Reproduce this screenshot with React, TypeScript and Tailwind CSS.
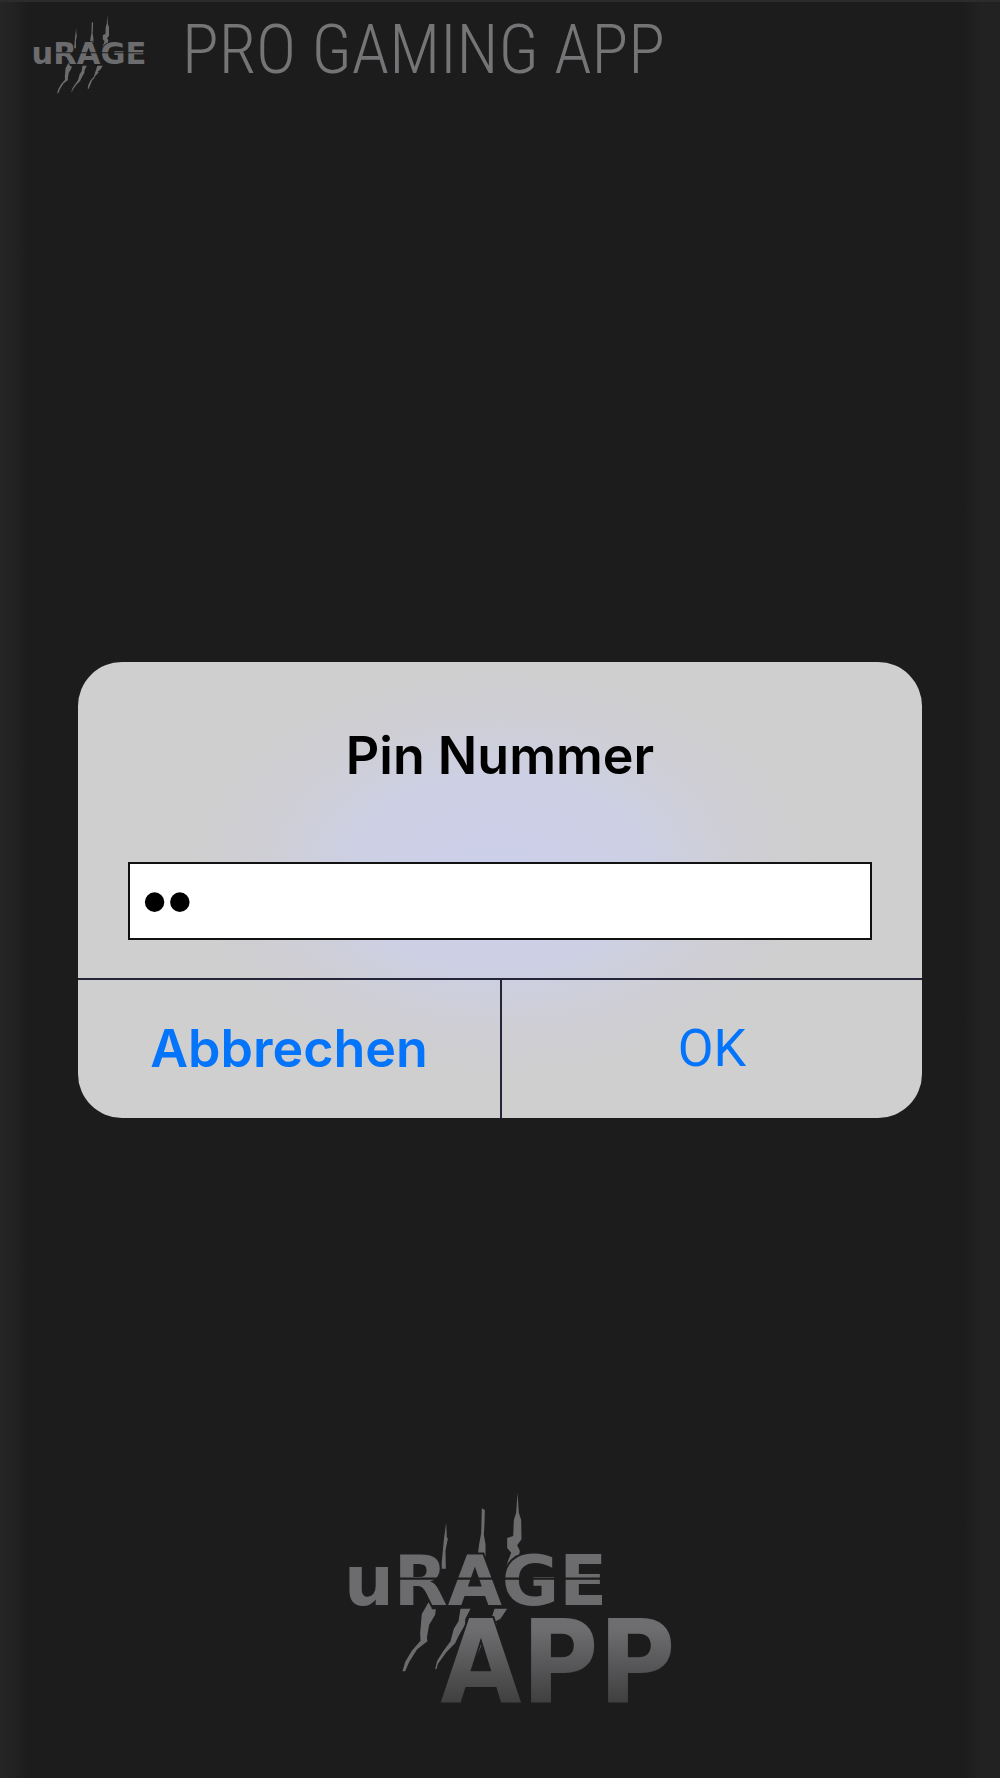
type LogoProps = {
  className?: string;
  withApp?: boolean;
};

const UrageLogo = ({ className, withApp = false }: LogoProps) => {
  return (
    <svg
      viewBox={withApp ? "50 30 1040 645" : "50 30 890 550"}
      className={className}
      role="img"
      aria-label={withApp ? "uRage App" : "uRage"}
    >
      <defs>
        <linearGradient id="appFade" x1="0" y1="0" x2="0" y2="1">
          <stop offset="0.25" stopColor="#6e6e70" />
          <stop offset="0.85" stopColor="#3b3b3c" />
        </linearGradient>
      </defs>
      <g fill="#6c6c6e">
        {/* upper scratches */}
        <path d="M407 128L409 172L412 176L405 212L406 266H392L397 212L400 180Z" />
        <path d="M514 85L523 90L522 132L520 164L525 192V230L508 250H484L502 224L506 192L512 160Z" />
        <path d="M621 38L625 98L632 120L633 178L620 196L628 212L624 240L604 262L584 276L592 244L602 218L590 204V174L608 168L610 120L617 98Z" />
        {/* lower scratches */}
        <path d="M358 360L364 388H376L374 404L356 434L349 474L351 484L320 508L296 546L284 574H276L284 546L304 512L330 482L329 458L334 402Z" />
        <path d="M450 386H480L464 418V434L444 468L434 490L408 516L382 552L378 568L374 566L380 542L398 514L420 484L430 446L444 424Z" />
        <path d="M552 386H590L570 416L556 424L560 434L538 456L530 474L518 484L492 546L486 542L490 518L506 486L528 462L540 424Z" />
      </g>
      {withApp && (
        <text
          x="742"
          y="667"
          textAnchor="middle"
          fontSize="350"
          fill="url(#appFade)"
          stroke="#1c1d1d"
          strokeWidth="12"
          paintOrder="stroke"
          className="font-['DejaVu_Sans_Condensed','DejaVu_Sans',sans-serif] font-bold"
        >
          APP
        </text>
      )}
      <text
        x="495"
        y="376"
        textAnchor="middle"
        fontSize="210"
        fill="#6c6c6e"
        stroke="#1c1d1d"
        strokeWidth="12"
        paintOrder="stroke"
        className="font-['DejaVu_Sans',sans-serif] font-bold"
      >
        uRAGE
      </text>
      <path d="M246 296H935" stroke="#1c1d1d" strokeWidth="7" />
    </svg>
  );
};

const PinDialog = () => {
  return (
    <form
      role="dialog"
      aria-labelledby="pin-title"
      className="w-full overflow-hidden rounded-[44px] bg-[#cfcfcf] bg-[radial-gradient(ellipse_38%_46%_at_50%_46%,#cccfea_0%,#cdd0e4_45%,#ceced4_75%,#cfcfcf_100%)] font-[Inter,sans-serif] text-[52px] leading-16"
      onSubmit={(e) => e.preventDefault()}
    >
      <div className="px-[50px] pt-[62px] pb-[38px]">
        <h1 id="pin-title" className="text-center font-semibold text-black">
          Pin Nummer
        </h1>
        <input
          type="password"
          defaultValue="12"
          aria-labelledby="pin-title"
          className="mt-[74px] block h-[78px] w-full border-2 border-[#111] bg-white px-3 font-['Liberation_Sans',sans-serif] text-[72px] text-black outline-none"
        />
      </div>
      <div className="grid grid-cols-2 border-t-2 border-[#25253a] text-[#0474fb]">
        <button type="button" className="h-[138px] font-semibold">
          Abbrechen
        </button>
        <button type="submit" className="h-[138px] border-l-2 border-[#25253a] font-[Roboto,sans-serif] font-normal">
          OK
        </button>
      </div>
    </form>
  );
};

const App = () => {
  return (
    <main className="grid min-h-dvh grid-rows-[1fr_auto_1fr] border-t-2 border-[#2b2c2c] bg-[#1c1c1c] bg-[linear-gradient(to_right,#252525_0,#222_14px,#1c1c1c_28px,#1c1c1c_calc(100%-36px),#222_calc(100%-20px),#222_100%)]">
      <header className="flex items-start gap-7 px-6 pt-3">
        <UrageLogo className="h-20 w-[130px] overflow-visible" />
        <p className="font-['Roboto_Condensed',Roboto,sans-serif] text-[68px] leading-[72px] font-light text-[#757577]">
          PRO GAMING APP
        </p>
      </header>
      <div className="px-[78px]">
        <PinDialog />
      </div>
      <footer className="flex items-end justify-center pb-[73px]">
        <UrageLogo withApp className="h-[215px] w-[347px] overflow-visible" />
      </footer>
    </main>
  );
};

export default App;
